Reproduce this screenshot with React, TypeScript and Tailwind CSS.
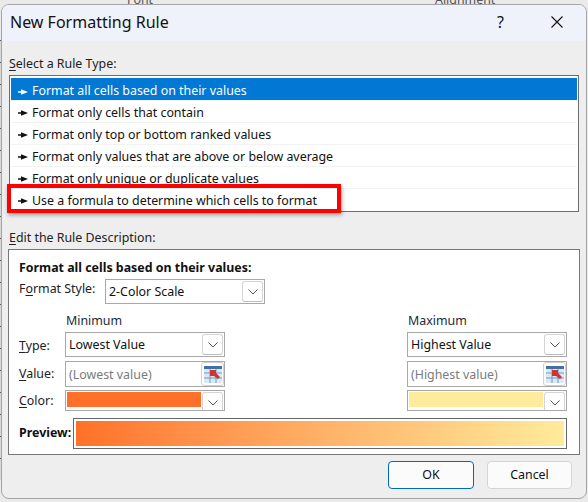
const font = { fontFamily: '"Noto Sans", "Open Sans", sans-serif' };

function Chevron() {
  return (
    <svg width="10" height="6" viewBox="0 0 10 6" fill="none" stroke="#555" strokeWidth="1">
      <path d="M0.5 0.5 L5 5 L9.5 0.5" />
    </svg>
  );
}

function DropButton() {
  return (
    <span className="w-[21px] h-[21px] flex items-center justify-center bg-white border border-[#d4d4d4] border-b-[#bbbbbb] rounded-[3px] shrink-0">
      <Chevron />
    </span>
  );
}

function RefIcon() {
  return (
    <span className="w-[23px] h-[24px] flex items-center justify-center border border-[#d0d0d0] rounded-[3px] bg-white shrink-0">
      <svg width="18" height="17" viewBox="0 0 18 17">
        <rect x="0" y="0" width="18" height="17" fill="#dbe8f5" />
        <rect x="0" y="0" width="18" height="3" fill="#3f72a8" />
        <path d="M0 7H18M0 12H18M6 3V17M12 3V17" stroke="#6f9bc8" strokeWidth="1" />
        <path d="M6 4 H12 V7 L16 11 L14 13 L10 10 H6 Z" fill="#d0342c" />
      </svg>
    </span>
  );
}

function Row({ text, selected }: { text: string; selected?: boolean }) {
  return (
    <div className={`h-[22px] flex items-center pl-[7px] ${selected ? "pt-[5px] bg-[#0078d4] text-white" : "pt-[3px] text-[#111] border-t border-[#f3f3f3]"}`}>
      <svg width="10" height="6" viewBox="0 0 10 6" className="mr-[4px]" fill={selected ? "#fff" : "#111"}>
        <path d="M0 2.2H3V0.3L10 3L3 5.7V3.8H0Z" />
      </svg>
      <span>{text}</span>
    </div>
  );
}

function Select({ text, className }: { text: string; className: string }) {
  return (
    <div className={`h-[25px] border border-[#a8a8a8] flex items-center justify-between pl-[3px] pr-[1px] text-[#111] ${className}`}>
      <span className="pt-[2px]">{text}</span>
      <DropButton />
    </div>
  );
}

function ValueInput({ text }: { text: string }) {
  return (
    <div className="h-[26px] w-[160px] border border-[#a8a8a8] flex items-center justify-between pl-[3px] text-[#7b7b7b]">
      <span className="pt-[2px]">{text}</span>
      <RefIcon />
    </div>
  );
}

function ColorPick({ color }: { color: string }) {
  return (
    <div className="h-[21px] w-[160px] border border-[#a8a8a8] flex items-start justify-between pl-[1px] pr-[1px] pt-[1px] overflow-hidden">
      <span className="h-[15px] w-[134px]" style={{ background: color }} />
      <DropButton />
    </div>
  );
}

function RuleColumn({ title, low, color }: { title: string; low: string; color: string }) {
  return (
    <div className="w-[160px] flex flex-col">
      <div className="h-[22px] pl-[1px] leading-[22px] text-[#1a2a3a]">{title}</div>
      <Select text={`${low} Value`} className="w-[160px]" />
      <div className="h-[4px]" />
      <ValueInput text={`(${low} value)`} />
      <div className="h-[3px]" />
      <ColorPick color={color} />
    </div>
  );
}

const U = ({ c }: { c: string }) => <span className="underline underline-offset-2">{c}</span>;

export default function App() {
  return (
    <div className="relative w-[588px] h-[502px] overflow-hidden bg-[#eaeaea] pt-[4px] pl-[1px] text-[12.4px]" style={font}>
      <span className="absolute left-[127px] top-[-9px] text-[#555]">Font</span>
      <span className="absolute left-[435px] top-[-9px] text-[#555]">Alignment</span>
      <div className="absolute left-0 top-[40px] w-[1px] h-[440px] bg-[repeating-linear-gradient(to_bottom,#555_0px,#555_1px,#d8d8d8_1px,#d8d8d8_22px)]" />
      <div className="relative w-[586px] h-[495px] bg-[#eeeeee] rounded-[8px] border border-[#a5a5a5] overflow-hidden">
        <div className="h-[36px] bg-[#eff2fb] flex items-center justify-between pl-[8px] pr-[23px] pb-[3px]">
          <span className="text-[16px] text-[#111]">New Formatting Rule</span>
          <div className="flex items-center gap-[47px]">
            <span className="text-[16px] text-[#111]">?</span>
            <svg width="12" height="12" viewBox="0 0 12 12" stroke="#111" strokeWidth="1.1">
              <path d="M0.5 0.5L11.5 11.5M11.5 0.5L0.5 11.5" />
            </svg>
          </div>
        </div>

        <div className="px-[7px]">
          <div className="h-[20px] mt-[13px] leading-[20px] text-[#222]"><U c="S" />elect a Rule Type:</div>
          <div className="relative mt-[1px] w-[570px] h-[137px] bg-white border border-[#6d6d6d] pt-[2px] pl-[1px] pr-[1px]">
            <Row text="Format all cells based on their values" selected />
            <Row text="Format only cells that contain" />
            <Row text="Format only top or bottom ranked values" />
            <Row text="Format only values that are above or below average" />
            <Row text="Format only unique or duplicate values" />
            <Row text="Use a formula to determine which cells to format" />
            <div className="absolute left-[-3px] top-[108px] w-[334px] h-[29px] border-[4px] border-[#ff0000] shadow-[1px_2px_4px_rgba(0,0,0,0.35)]" />
          </div>

          <div className="h-[20px] mt-[16px] leading-[20px] text-[#222]"><U c="E" />dit the Rule Description:</div>
          <div className="mt-[1px] -ml-[1px] w-[572px] h-[206px] bg-white border border-[#777] pl-[10px] pr-[12px] pt-[8px]">
            <div className="font-bold h-[20px] leading-[20px] text-[#111]">Format all cells based on their values:</div>
            <div className="flex mt-[1px]">
              <div className="w-[86px] h-[19px] leading-[19px] text-[#222]">F<U c="o" />rmat Style:</div>
              <Select text="2-Color Scale" className="w-[160px]" />
            </div>
            <div className="flex justify-between mt-[6px]">
              <div className="flex">
                <div className="w-[46px] flex flex-col text-[#222] shrink-0">
                  <div className="h-[22px]" />
                  <div className="h-[25px] leading-[28px]"><U c="T" />ype:</div>
                  <div className="h-[4px]" />
                  <div className="h-[26px] leading-[26px]"><U c="V" />alue:</div>
                  <div className="h-[3px]" />
                  <div className="h-[21px] leading-[21px]"><U c="C" />olor:</div>
                </div>
                <RuleColumn title="Minimum" low="Lowest" color="#ff7128" />
              </div>
              <RuleColumn title="Maximum" low="Highest" color="#ffeb9c" />
            </div>
            <div className="flex items-center mt-[7px]">
              <div className="w-[54px] font-bold text-[#111]">Preview:</div>
              <div className="w-[494px] h-[31px] border border-[#666] p-[2px] bg-white">
                <div className="w-full h-full bg-gradient-to-r from-[#ff7128] to-[#ffeb9c]" />
              </div>
            </div>
          </div>

          <div className="flex justify-end gap-[13px] mt-[6px] pr-[7px]">
            <button className="w-[86px] h-[28px] rounded-[4px] bg-[#fbfbfb] border border-[#0067c0] text-[#111] pt-[1px]">OK</button>
            <button className="w-[85px] h-[28px] rounded-[4px] bg-[#fbfbfb] border border-[#d5d5d5] text-[#111] pt-[1px]">Cancel</button>
          </div>
        </div>
      </div>
    </div>
  );
}
